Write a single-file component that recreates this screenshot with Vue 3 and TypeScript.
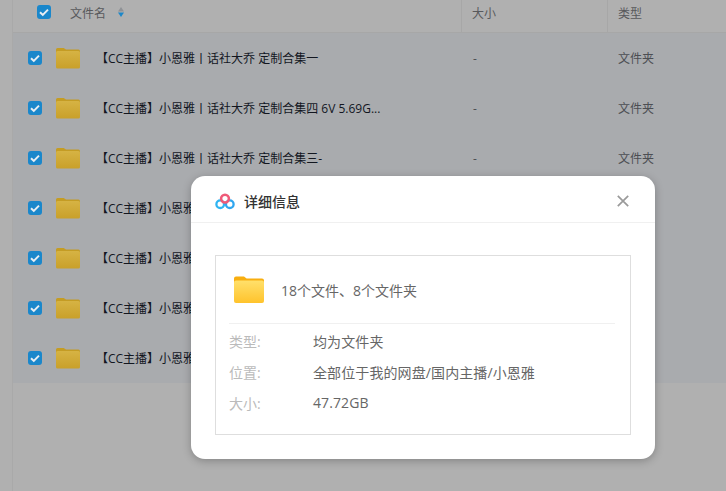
<script setup lang="ts">
const names = [
  '【CC主播】小恩雅丨话社大乔 定制合集一',
  '【CC主播】小恩雅丨话社大乔 定制合集四 6V 5.69G...',
  '【CC主播】小恩雅丨话社大乔 定制合集三-',
  '【CC主播】小恩雅丨话社大乔 定制合集二',
  '【CC主播】小恩雅丨话社大乔 定制合集五',
  '【CC主播】小恩雅丨话社大乔 定制合集六',
  '【CC主播】小恩雅丨话社大乔 定制合集七',
]

const details = [
  { label: '类型:', value: '均为文件夹' },
  { label: '位置:', value: '全部位于我的网盘/国内主播/小恩雅' },
  { label: '大小:', value: '47.72GB' },
]
</script>

<template>
  <div class="page">
    <aside class="side" />
    <main class="list">
      <div class="head">
        <div class="col-name">
          <span class="check">
            <svg viewBox="0 0 14 14" width="14" height="14"><path d="M3 7.2l2.8 2.7L11 4.6" fill="none" stroke="#e8eef3" stroke-width="2" /></svg>
          </span>
          <span class="head-title">文件名</span>
          <svg class="sort" viewBox="0 0 6 10" width="6" height="10">
            <path d="M3 0l3 4.4H0z" fill="#8f9296" />
            <path d="M3 10L0 5.6h6z" fill="#1c87c9" />
          </svg>
        </div>
        <div class="col-size">大小</div>
        <div class="col-type">类型</div>
      </div>

      <div v-for="name in names" :key="name" class="row">
        <div class="row-name">
          <span class="check">
            <svg viewBox="0 0 14 14" width="14" height="14"><path d="M3 7.2l2.8 2.7L11 4.6" fill="none" stroke="#e8eef3" stroke-width="2" /></svg>
          </span>
          <svg class="folder" viewBox="0 0 24 22" width="24" height="22">
            <defs>
              <linearGradient id="rowFolder" x1="0" y1="0" x2="0" y2="1">
                <stop offset="0" stop-color="#d6b344" />
                <stop offset="1" stop-color="#c9a02a" />
              </linearGradient>
            </defs>
            <path d="M0 2.5A1.5 1.5 0 0 1 1.5 1h6.2L10 2.6h12.5A1.5 1.5 0 0 1 24 4.1V6H0z" fill="#c49c24" />
            <rect y="4" width="24" height="17.5" rx="1.6" fill="url(#rowFolder)" />
          </svg>
          <span class="file-name">{{ name }}</span>
        </div>
        <div class="row-size">-</div>
        <div class="row-type">文件夹</div>
      </div>
    </main>

    <section class="modal">
      <header class="modal-head">
        <svg class="logo" viewBox="0 0 20 17" width="20" height="17">
          <circle cx="5.2" cy="11.2" r="3.8" fill="none" stroke="#2fb4f2" stroke-width="2.3" />
          <circle cx="14.8" cy="11.2" r="3.8" fill="none" stroke="#2fa6ef" stroke-width="2.3" />
          <circle cx="10" cy="5.6" r="3.9" fill="none" stroke="#ef5a78" stroke-width="2.6" />
        </svg>
        <span class="modal-title">详细信息</span>
        <svg class="close" viewBox="0 0 12 12" width="12" height="12">
          <path d="M.8.8l10.4 10.4M11.2.8L.8 11.2" stroke="#9a9a9a" stroke-width="1.7" fill="none" />
        </svg>
      </header>

      <div class="modal-body">
        <div class="info">
          <div class="summary">
            <svg viewBox="0 0 30 27" width="30" height="27">
              <path d="M0 2.5A2 2 0 0 1 2 .5h8l2.6 2H28a2 2 0 0 1 2 2V8H0z" fill="#f8ae0f" />
              <defs>
                <linearGradient id="folderFill" x1="0" y1="0" x2="0" y2="1">
                  <stop offset="0" stop-color="#ffe06b" />
                  <stop offset="1" stop-color="#ffc32c" />
                </linearGradient>
              </defs>
              <rect y="4.5" width="30" height="22.5" rx="2" fill="url(#folderFill)" />
            </svg>
            <span>18个文件、8个文件夹</span>
          </div>
          <dl class="details">
            <div v-for="item in details" :key="item.label" class="detail">
              <dt>{{ item.label }}</dt>
              <dd>{{ item.value }}</dd>
            </div>
          </dl>
        </div>
      </div>
    </section>
  </div>
</template>

<style>
html,
body {
  margin: 0;
  overflow: hidden;
}
</style>

<style scoped>
.page {
  position: relative;
  display: flex;
  width: 726px;
  height: 491px;
  overflow: hidden;
  background: #b0b0b0;
  font-family: "Open Sans", "Noto Sans CJK SC", sans-serif;
  font-size: 12px;
}

.side {
  width: 12px;
  flex-shrink: 0;
  border-right: 1px solid #a9a9a9;
}

.list {
  flex: 1;
}

.head {
  display: flex;
  height: 32px;
  border-bottom: 1px solid #a7a7a7;
  color: #58595c;
  line-height: 27px;
}

.col-name {
  display: flex;
  align-items: flex-start;
  width: 449px;
  padding-left: 24px;
  box-sizing: border-box;
  border-right: 1px solid #a7a7a7;
}

.col-name .check {
  margin-top: 5px;
}

.head-title {
  margin-left: 19px;
}

.sort {
  margin: 7px 0 0 12px;
}

.col-size {
  width: 146px;
  padding-left: 10px;
  box-sizing: border-box;
  border-right: 1px solid #a7a7a7;
}

.col-type {
  padding-left: 10px;
}

.check {
  display: flex;
  align-items: center;
  justify-content: center;
  width: 14px;
  height: 14px;
  border-radius: 3px;
  background: #1a87cb;
}

.row {
  display: flex;
  align-items: center;
  height: 50px;
  background: #a9abae;
  color: #4c4e53;
}

.row-name {
  display: flex;
  align-items: center;
  width: 449px;
  padding-left: 15px;
  box-sizing: border-box;
}

.folder {
  margin-left: 14px;
}

.file-name {
  margin-left: 16px;
  color: #12161f;
}

.row-size {
  width: 145px;
  padding-left: 11px;
  box-sizing: border-box;
}

.row-type {
  padding-left: 11px;
}

.modal {
  position: absolute;
  left: 191px;
  top: 176px;
  width: 464px;
  height: 283px;
  border-radius: 14px;
  background: #fff;
  box-shadow: 0 2px 8px rgba(0, 0, 0, 0.25);
}

.modal-head {
  display: flex;
  align-items: center;
  height: 47px;
  padding: 4px 26px 0 24px;
  box-sizing: border-box;
  border-bottom: 1px solid #f0f0f0;
}

.modal-title {
  flex: 1;
  margin-left: 9px;
  color: #333;
  font-size: 14px;
  font-weight: 500;
}

.modal-body {
  padding: 32px 24px 24px;
}

.info {
  height: 180px;
  padding: 0 15px 0 13px;
  box-sizing: border-box;
  border: 1px solid #dedede;
}

.summary {
  display: flex;
  align-items: center;
  gap: 17px;
  height: 67px;
  padding-left: 5px;
  border-bottom: 1px solid #f0f0f0;
  color: #666;
  font-size: 14px;
}

.details {
  margin: 0;
  padding-top: 1px;
}

.detail {
  display: flex;
  align-items: center;
  height: 31px;
  font-size: 14px;
}

.detail dt {
  width: 84px;
  color: #bbb;
}

.detail dd {
  margin: 0;
  color: #666;
  letter-spacing: 0.1px;
}
</style>
